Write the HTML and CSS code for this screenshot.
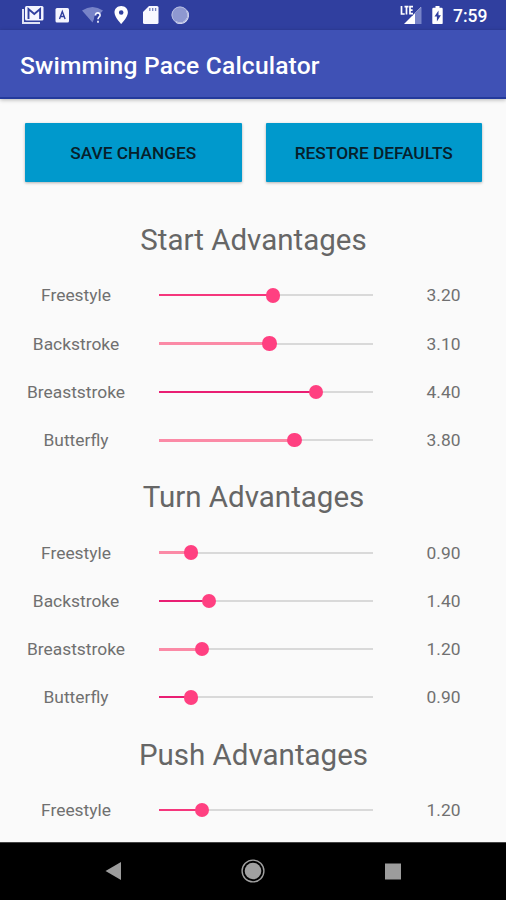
FILE: index.html
```html
<!DOCTYPE html>
<html lang="en">
<head>
<meta charset="utf-8">
<title>Swimming Pace Calculator</title>
<link rel="stylesheet" href="styles.css">
</head>
<body>
<div class="screen">
  <div class="status">
    <svg class="status-icons" width="200" height="30" viewBox="0 0 200 30">
      <path d="M23 9v14h17" fill="none" stroke="#dfe2f4" stroke-width="2"/>
      <rect x="25" y="6" width="18.500" height="14.500" rx="1.500" fill="#f4f5ff"/>
      <path d="M28.500 19V9l5.800 5 5.800-5v10" fill="none" stroke="#303f9f" stroke-width="1.900"/>
      <rect x="55.500" y="8" width="13.500" height="14.500" rx="1.500" fill="#f4f5ff"/>
      <path d="M59.500 19l2.800-7.500L65.100 19M60.300 16.500h4" fill="none" stroke="#303f9f" stroke-width="1.400"/>
      <path d="M82 10.500q10.500-7 21 0l-3 3.500q-6-1-6 5l-1.500 3.500z" fill="#7783c8"/>
      <path d="M95.500 15.500c0-3.700 5-3.300 4.500 0-.3 1.600-2 1.600-2 3.800M98 20.800v2" fill="none" stroke="#f4f5ff" stroke-width="1.700"/>
      <path fill-rule="evenodd" d="M121.200 6c-4 0-6.700 2.900-6.700 6.500 0 4.700 6.700 11.500 6.700 11.500s6.700-6.800 6.700-11.500c0-3.600-2.700-6.500-6.700-6.500zm0 4.200a2.300 2.300 0 1 1 0 4.600 2.300 2.300 0 0 1 0-4.600z" fill="#fff"/>
      <path d="M149 6h8q1.500 0 1.500 1.500v15q0 1.500-1.500 1.500h-12.500q-1.500 0-1.500-1.500V12z" fill="#f8f8ff"/>
      <path d="M149.800 8v3M152.700 8v3M155.600 8v3" stroke="#7580bd" stroke-width="1.300"/>
      <circle cx="180" cy="15" r="8.500" fill="#8e98d0"/>
      <path d="M187 11a8 8 0 0 1-11 11" fill="none" stroke="#e4e7f8" stroke-width="1.700"/>
      <circle cx="180" cy="15" r="8" fill="none" stroke="#b2b9e0" stroke-width="1"/>
    </svg>
    <div class="status-right">
      <svg width="53" height="30" viewBox="0 0 53 30">
        <path d="M4 24L21 7v17z" fill="#fff"/>
        <path d="M15 13l6.500-6v17H15z" fill="#7783c8"/>
        <path d="M1.500 6v8h3.200M4.500 6.700h4M6.500 6.700v7.800M13 6.700h-3v7h3M10 10.200h2.600" fill="none" stroke="#303f9f" stroke-width="3.500"/>
        <path d="M1.500 6v8h3.200M4.500 6.700h4M6.500 6.700v7.800M13 6.700h-3v7h3M10 10.200h2.600" fill="none" stroke="#fff" stroke-width="1.700"/>
        <path d="M35.500 6h4v1.700h2q1.200 0 1.200 1.200v14q0 1.200-1.200 1.200h-8q-1.200 0-1.200-1.200v-14q0-1.200 1.200-1.200h2z" fill="#fff"/>
        <path d="M38.500 10.500l-4 6h2.400v5l4-6.300h-2.400z" fill="#303f9f"/>
      </svg>
      <span class="clock">7:59</span>
    </div>
  </div>
  <header class="appbar"><h1>Swimming Pace Calculator</h1></header>
  <main class="content">
    <div class="actions">
      <button class="btn">SAVE CHANGES</button>
      <button class="btn">RESTORE DEFAULTS</button>
    </div>
    <section>
      <h2>Start Advantages</h2>
      <div class="row"><span class="label">Freestyle</span><div class="track"><i class="fill mid" style="width:53.33%"></i></div><span class="value">3.20</span></div>
      <div class="row"><span class="label">Backstroke</span><div class="track"><i class="fill soft" style="width:51.67%"></i></div><span class="value">3.10</span></div>
      <div class="row"><span class="label">Breaststroke</span><div class="track"><i class="fill" style="width:73.33%"></i></div><span class="value">4.40</span></div>
      <div class="row"><span class="label">Butterfly</span><div class="track"><i class="fill soft" style="width:63.33%"></i></div><span class="value">3.80</span></div>
    </section>
    <section>
      <h2>Turn Advantages</h2>
      <div class="row"><span class="label">Freestyle</span><div class="track"><i class="fill soft" style="width:15%"></i></div><span class="value">0.90</span></div>
      <div class="row"><span class="label">Backstroke</span><div class="track"><i class="fill" style="width:23.33%"></i></div><span class="value">1.40</span></div>
      <div class="row"><span class="label">Breaststroke</span><div class="track"><i class="fill soft" style="width:20%"></i></div><span class="value">1.20</span></div>
      <div class="row"><span class="label">Butterfly</span><div class="track"><i class="fill" style="width:15%"></i></div><span class="value">0.90</span></div>
    </section>
    <section>
      <h2>Push Advantages</h2>
      <div class="row"><span class="label">Freestyle</span><div class="track"><i class="fill mid" style="width:20%"></i></div><span class="value">1.20</span></div>
    </section>
  </main>
  <nav class="navbar">
    <svg width="24" height="24" viewBox="0 0 24 24"><path d="M4.500 12L20 3v18z" fill="#9c9c9c"/></svg>
    <svg width="24" height="24" viewBox="0 0 24 24"><circle cx="12" cy="12" r="8.300" fill="#a0a0a0"/><circle cx="12" cy="12" r="10.900" fill="none" stroke="#a0a0a0" stroke-width="1.400"/></svg>
    <svg width="24" height="24" viewBox="0 0 24 24"><path d="M4 4.500h16v16H4z" fill="#9c9c9c"/></svg>
  </nav>
</div>
</body>
</html>
```
FILE: styles.css
```css
* { box-sizing: border-box; }
body { margin: 0; font-family: Roboto, "Liberation Sans", sans-serif; }
.screen { width: 506px; height: 900px; display: flex; flex-direction: column; background: #fafafa; overflow: hidden; }
.status { flex: none; height: 30px; background: #303f9f; display: flex; justify-content: space-between; }
.status svg { display: block; }
.status-right { display: flex; align-items: center; width: 106px; }
.clock { color: #fff; font-size: 17.5px; font-weight: 500; line-height: 30px; padding-top: 2px; }
.appbar { flex: none; height: 69px; padding-left: 20px; background: #3f51b5; border-bottom: 2px solid #243a9c; box-shadow: 0 1px 4px rgba(0,0,0,.28); display: flex; align-items: center; z-index: 1; }
h1 { margin: 4px 0 0; font-size: 24.6px; letter-spacing: .18px; font-weight: 500; color: #fff; line-height: 30px; }
.content { flex: 1; min-height: 0; overflow: hidden; padding-top: 24px; }
.actions { display: flex; gap: 24px; padding: 0 24px 0 25px; margin-bottom: 25px; }
.btn { flex: 1; height: 59px; border: 0; border-radius: 1px; padding: 1px 0 0; background: #0099cc; color: #07202b; font: 500 17.3px Roboto, "Liberation Sans", sans-serif; box-shadow: 0 1px 3px rgba(0,0,0,.3); }
h2 { margin: 0; height: 64.3px; padding: 15px 0 0 1px; font-size: 29.5px; line-height: 36px; font-weight: 400; color: #666; text-align: center; }
.row { height: 48.25px; display: grid; grid-template-columns: 152px 221px 133px; align-items: center; font-size: 17.4px; line-height: 24px; color: #707070; }
.label, .value { text-align: center; }
.value { padding-left: 8px; }
.track { width: 214px; height: 2px; margin-left: 7px; background: #d9d9d9; display: flex; align-items: center; }
.fill { display: flex; align-items: center; justify-content: flex-end; height: 2px; background: #e91e73; }
.fill.mid { background: #f5367c; }
.fill.soft { height: 3px; background: #fb8aa6; }
.fill::after { content: ""; flex: none; width: 14.500px; height: 14.500px; margin-right: -7.250px; border-radius: 50%; background: #ff4081; }
.navbar { flex: none; height: 58px; padding-bottom: 2px; background: #000; display: flex; justify-content: center; align-items: center; gap: 116px; border-top: 1px solid #444; }
```
